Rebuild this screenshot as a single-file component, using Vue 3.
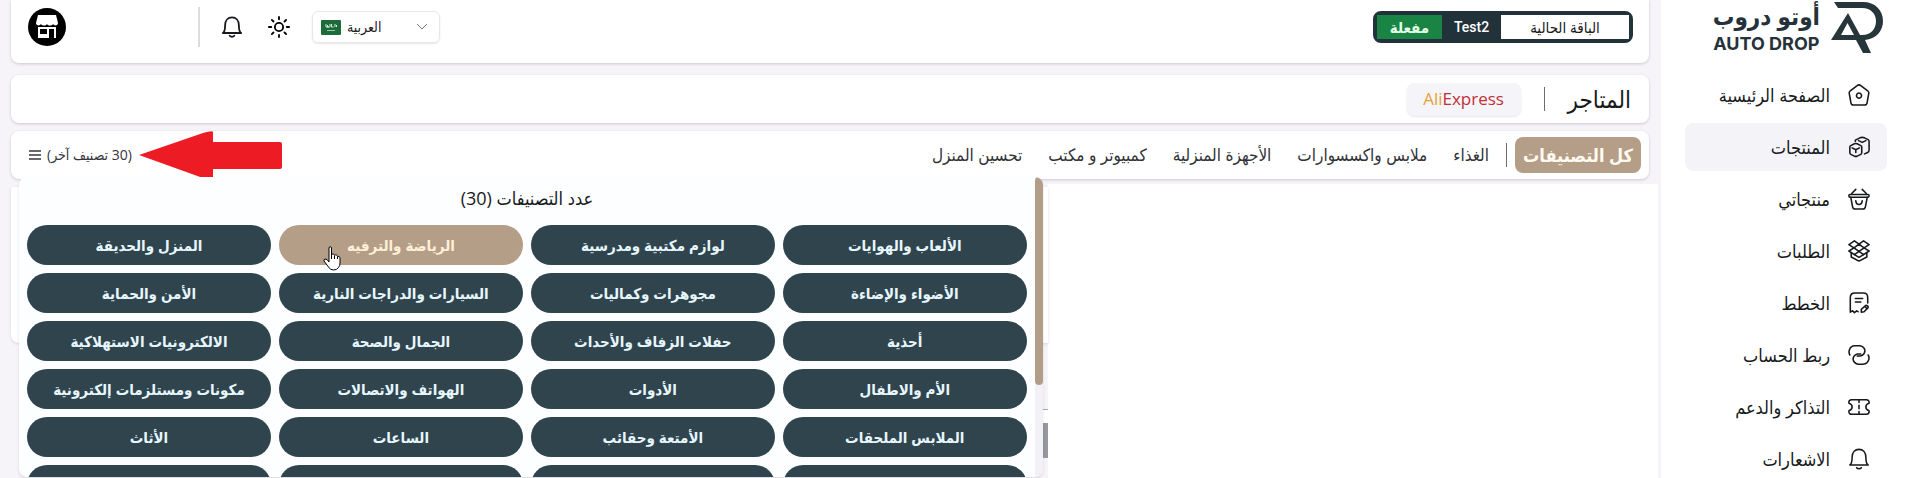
<template>
  <div class="page" dir="rtl">
    <aside class="sidebar">
      <a href="#" class="brand">
        <svg class="brand-mark" viewBox="0 0 54 52">
          <path fill="#26363b" fill-rule="evenodd" d="M4 0H33C45 0 53 8 53 19C53 29 46 37 35 38L41 51H33L26 38H1L18 11L30 33H32C41 33 46 27 46 19C46 12 41 6 32 6H8ZM17.500 21L11 33H24Z" />
        </svg>
        <span class="brand-text">
          <strong class="brand-ar">أوتو دروب</strong>
          <strong class="brand-en">AUTO DROP</strong>
        </span>
      </a>
      <nav class="menu">
        <a
          v-for="item in menuItems"
          :key="item.label"
          href="#"
          class="menu-item"
          :class="{ active: item.label === activeMenu }"
          @click.prevent="activeMenu = item.label"
        >
          <svg class="menu-icon" viewBox="0 0 24 24">
            <path v-for="d in item.paths" :key="d" :d="d" />
          </svg>
          <span>{{ item.label }}</span>
        </a>
      </nav>
    </aside>

    <main class="main">
      <header class="card header">
        <div class="plan">
          <span class="plan-title">الباقة الحالية</span>
          <span class="plan-name">Test2</span>
          <span class="plan-state">مفعلة</span>
        </div>
        <div class="tools">
          <label class="lang">
            <svg class="flag" viewBox="0 0 20 15">
              <rect width="20" height="15" rx="1" fill="#1d6b39" />
              <path d="M5 4v3M6.500 5v2h2M9 4v3M10.500 4v3h2M14 4v3M15.500 5v2M5 7h3" fill="none" stroke="#d5e8da" stroke-width="1" />
              <path d="M6 10.500h8" stroke="#9cc7aa" stroke-width="1" />
            </svg>
            <select v-model="language" aria-label="اللغة">
              <option>العربية</option>
              <option>English</option>
            </select>
            <svg class="chevron" viewBox="0 0 12 8"><path d="M1 1l5 5 5-5" /></svg>
          </label>
          <button class="icon-btn" type="button" aria-label="الوضع">
            <svg viewBox="0 0 24 24" class="sun">
              <circle cx="12" cy="12" r="4.500" />
              <path d="M12 1v2.500M12 20.500V23M1 12h2.500M20.500 12H23M4.200 4.200l1.800 1.800M18 18l1.800 1.800M4.200 19.800L6 18M18 6l1.800-1.800" />
            </svg>
          </button>
          <button class="icon-btn" type="button" aria-label="الاشعارات">
            <svg viewBox="0 0 24 24" class="bell">
              <path v-for="d in bell" :key="d" :d="d" />
            </svg>
          </button>
          <span class="tools-line"></span>
          <button class="avatar" type="button" aria-label="المتجر">
            <svg viewBox="0 0 38 38">
              <circle cx="19" cy="19" r="19" fill="#000" />
              <path fill="#fff" fill-rule="evenodd" d="M10 7H28L30 15C30 18 26 18 25 16C24 18 20 18 19 16C18 18 14 18 13 16C12 18 8 18 8 15ZM10 19H28V30H10ZM12 21V26H19V21ZM21 21V30H26V21Z" />
            </svg>
          </button>
        </div>
      </header>

      <section class="card stores">
        <h1>المتاجر</h1>
        <span class="line"></span>
        <button class="store" type="button"><span class="ali">Ali</span>Express</button>
      </section>

      <section class="card categories">
        <button class="all" type="button">كل التصنيفات</button>
        <span class="line"></span>
        <nav class="tabs">
          <a v-for="tab in tabs" :key="tab" href="#">{{ tab }}</a>
        </nav>
        <svg class="arrow" viewBox="0 0 143 49">
          <path d="M0 24L64 2Q74 -1 74 1V11H141Q143 11 143 13V36Q143 38 141 38H74V49Q68 49 64 47Z" fill="#ed1c24" />
        </svg>
        <button class="more" type="button" @click="open = !open">
          <span>(30 تصنيف آخر)</span>
          <svg viewBox="0 0 12 12"><path d="M0 2h12M0 6h12M0 10h12" /></svg>
        </button>

        <div v-if="open" class="dropdown">
          <div class="scrollbar"><div class="thumb"></div></div>
          <div class="panel">
            <h2>عدد التصنيفات (30)</h2>
            <div class="grid">
              <button
                v-for="(name, index) in categories"
                :key="index"
                type="button"
                class="pill"
                :class="{ hovered: name === hovered }"
              >
                {{ name }}
                <svg v-if="name === hovered" class="pointer" viewBox="0 0 18 25">
                  <path d="M6 2Q6 0.800 7.200 0.800Q8.500 0.800 8.500 2V9Q9 7.500 10.300 8Q11.500 8.200 11.500 9.500Q12.500 8.500 13.500 9Q14.500 9.500 14.500 10.500Q16 10 17 11.500V17Q17 20 15.500 21.500Q14 24 10.500 24Q7 24 5.500 21L1 15Q0.500 13.500 2 13Q4 12.500 6 16Z" fill="#fff" stroke="#000" />
                  <path d="M8.500 9v4M11.500 10v3M14.500 11v2" stroke="#000" />
                </svg>
              </button>
            </div>
          </div>
        </div>
      </section>

      <div class="content">
        <div class="blank"></div>
        <div class="results">
          <div class="result-card"></div>
          <div class="strip"></div>
        </div>
      </div>
    </main>
  </div>
</template>

<script setup>
import { ref } from 'vue';

const activeMenu = ref('المنتجات');
const language = ref('العربية');
const open = ref(true);
const hovered = ref('الرياضة والترفيه');

const bell = [
  'M2 18.500H22C19.500 17 19.500 14 19.500 10C19.500 5 16.500 1.500 12 1.500S4.500 5 4.500 10C4.500 14 4.500 17 2 18.500Z',
  'M9.500 21.500C10.500 23 13.500 23 14.500 21.500',
];

const menuItems = [
  {
    label: 'الصفحة الرئيسية',
    paths: [
      'M10 1.800Q12 0.200 14 1.800L21.500 7.500Q23 8.500 22.600 10.500L20.800 20.500Q20.300 23 18 23H6Q3.700 23 3.200 20.500L1.400 10.500Q1 8.500 2.500 7.500Z',
      'M12 9.800a2.800 2.800 0 1 0 0.010 0Z',
    ],
  },
  {
    label: 'المنتجات',
    paths: [
      'M2 12Q2 11 3 10.500L7 8.500Q8.500 8 10 8.500L14 10.500Q15 11 15 12V18Q15 19.500 14 20L10 22Q8.500 22.500 7 22L3 20Q2 19.500 2 18Z',
      'M4.500 13L8.500 15L12.500 13M8.500 15V18',
      'M8 6V4.500L13 2Q15.500 1 18 2L22 4Q23 4.500 23 6V15Q23 17 21.500 18L18 19.500M11.500 5L15.500 7L19.500 5',
    ],
  },
  {
    label: 'منتجاتي',
    paths: [
      'M2 7H22Q23 7 23 8.500T22 10H2Q1 10 1 8.500T2 7Z',
      'M3 10L5 20.500Q5.500 23 8 23H16Q18.500 23 19 20.500L21 10M4 6L8.500 1.500M20 6L15.500 1.500',
      'M8.500 14Q9 18 12 18T15.500 14',
    ],
  },
  {
    label: 'الطلبات',
    paths: [
      'M7 1L12 4.500L17 1L23 5L17.500 8.500L23 12L17 16L12 12.500L7 16L1 12L6.500 8.500L1 5Z',
      'M12 4.500L17.500 8.500L12 12.500L6.500 8.500Z',
      'M3.500 14V18.500L12 23L20.500 18.500V14M7 16L12 19L17 16',
    ],
  },
  {
    label: 'الخطط',
    paths: [
      'M21.500 12V6Q21.500 1 16.500 1H7.500Q2.500 1 2.500 6V22L5 20.500L7 22.500L9.500 20.500L11 21.500',
      'M8 7H16M8 11H14',
      'M14.500 19L19.500 14.500Q22 14.500 22 17L17.500 21.500L14.500 22ZM18.500 16L20.500 18',
    ],
  },
  {
    label: 'ربط الحساب',
    paths: [
      'M2 12Q0.500 9.500 1.500 6.500Q3 2 7.500 2H13Q18 3 18.500 7.500Q18 12 13.500 13H10',
      'M22 12Q23.500 14.500 22.500 17.500Q21 22 16.500 22H11Q6 21 5.500 16.500Q6 12 10.500 11H14',
    ],
  },
  {
    label: 'التذاكر والدعم',
    paths: [
      'M4 4H20Q23 4 23 7V8Q19.500 9 19.500 12T23 16V17Q23 20 20 20H4Q1 20 1 17V16Q4.500 15 4.500 12T1 8V7Q1 4 4 4Z',
      'M12 4V7M12 10V14M12 17V20',
    ],
  },
  { label: 'الاشعارات', paths: bell },
];

const tabs = [
  'الغذاء',
  'ملابس واكسسوارات',
  'الأجهزة المنزلية',
  'كمبيوتر و مكتب',
  'تحسين المنزل',
];

const categories = [
  'الألعاب والهوايات', 'لوازم مكتبية ومدرسية', 'الرياضة والترفيه', 'المنزل والحديقة',
  'الأضواء والإضاءة', 'مجوهرات وكماليات', 'السيارات والدراجات النارية', 'الأمن والحماية',
  'أحذية', 'حفلات الزفاف والأحداث', 'الجمال والصحة', 'الالكترونيات الاستهلاكية',
  'الأم والاطفال', 'الأدوات', 'الهواتف والاتصالات', 'مكونات ومستلزمات إلكترونية',
  'الملابس الملحقات', 'الأمتعة وحقائب', 'الساعات', 'الأثاث',
  '', '', '', '',
];
</script>

<style>
body {
  background: #fff;
  overflow: hidden;
}
</style>

<style scoped>
* {
  box-sizing: border-box;
}

.page {
  display: flex;
  height: 100vh;
  overflow: hidden;
  background: #f6f4f8;
  color: #17191c;
  font-family: "Open Sans", "DejaVu Sans Condensed", "DejaVu Sans", sans-serif;
  font-size: 14px;
  line-height: 24px;
}

a {
  color: inherit;
  text-decoration: none;
}

button,
select {
  padding: 0;
  border: 0;
  background: none;
  color: inherit;
  font: inherit;
  cursor: pointer;
}

svg {
  display: block;
  flex: none;
  fill: none;
}

/* sidebar */
.sidebar {
  flex: none;
  width: 257px;
  padding: 0 31px 0 24px;
  overflow: hidden;
  background: #fff;
}

.brand {
  display: flex;
  gap: 10px;
  height: 71px;
  padding: 2px 3px 0 0;
  color: #26323a;
}

.brand-mark {
  width: 54px;
  height: 52px;
}

.brand-text {
  display: flex;
  flex-direction: column;
  align-items: center;
  white-space: nowrap;
}

.brand-ar {
  font-size: 24px;
  line-height: 28px;
}

.brand-en {
  font-family: Inter, sans-serif;
  font-size: 18px;
  line-height: 28px;
}

.menu {
  display: flex;
  flex-direction: column;
  gap: 4px;
}

.menu-item {
  display: flex;
  flex: none;
  align-items: center;
  gap: 18px;
  height: 48px;
  padding: 0 17px;
  border-radius: 8px;
  font-size: 18px;
  white-space: nowrap;
}

.menu-item.active {
  background: #f4f3f8;
}

.menu-icon {
  width: 22px;
  height: 22px;
  stroke: #17191c;
  stroke-width: 1.7;
  stroke-linejoin: round;
  stroke-linecap: round;
}

/* main column */
.main {
  display: flex;
  flex: 1;
  flex-direction: column;
  min-width: 0;
}

.card {
  display: flex;
  flex: none;
  align-items: center;
  height: 48px;
  margin: 0 12px 8px 11px;
  border-radius: 8px;
  background: #fff;
  box-shadow: 0 1px 3px rgba(40, 30, 60, 0.2);
  white-space: nowrap;
}

.header {
  align-items: flex-start;
  justify-content: space-between;
  height: 63px;
  margin-bottom: 12px;
  padding: 7px 16px 0 17px;
  border-radius: 0 0 8px 8px;
}

.plan {
  display: flex;
  height: 32px;
  margin-top: 4px;
  border: 4px solid #22323a;
  border-radius: 8px;
  background: #22323a;
  text-align: center;
}

.plan-title {
  width: 128px;
  background: #fff;
  font-size: 15px;
}

.plan-name {
  width: 59px;
  color: #fff;
  font-family: Roboto, sans-serif;
  font-weight: 500;
}

.plan-state {
  width: 65px;
  background: #198443;
  color: #e2ffe8;
  font-size: 15px;
  font-weight: 600;
}

.tools {
  display: flex;
  align-items: center;
  height: 40px;
}

.lang {
  display: flex;
  direction: ltr;
  align-items: center;
  gap: 6px;
  width: 128px;
  height: 32px;
  margin-left: 22px;
  padding: 0 11px 0 8px;
  border: 1px solid #e8e6ea;
  border-radius: 6px;
  box-shadow: 0 1px 2px rgba(0, 0, 0, 0.1);
}

.flag {
  width: 20px;
  height: 15px;
}

.lang select {
  flex: 1;
  min-width: 0;
  appearance: none;
  outline: none;
}

.chevron {
  width: 12px;
  height: 8px;
  stroke: #777;
}

.icon-btn {
  margin-left: 25px;
}

.icon-btn svg {
  width: 22px;
  height: 22px;
  stroke: #17191c;
  stroke-width: 2;
  stroke-linecap: round;
  stroke-linejoin: round;
}

.icon-btn .sun {
  stroke: #000;
}

.tools-line {
  width: 2px;
  height: 40px;
  margin-left: 132px;
  margin-right: -4px;
  background: #dcdcde;
}

.avatar svg {
  width: 38px;
  height: 38px;
}

.stores {
  padding: 0 18px;
}

.stores h1 {
  margin: 0;
  font-size: 24px;
  font-weight: 400;
  line-height: 32px;
}

.line {
  width: 1px;
  height: 24px;
  background: #6a6c70;
}

.stores .line {
  margin: 0 23px;
}

.store {
  width: 114px;
  height: 33px;
  border-radius: 8px;
  background: #f5f4f9;
  box-shadow: 0 1px 2px rgba(40, 30, 60, 0.12);
  color: #bf3038;
  font-size: 17px;
  direction: ltr;
}

.ali {
  color: #e5a23c;
}

.categories {
  position: relative;
  margin-bottom: 5px;
  padding: 0 8px 0 18px;
}

.all {
  height: 36px;
  padding: 0 8px;
  border-radius: 8px;
  background: #b59e87;
  color: #fffaf0;
  font-size: 18px;
  font-weight: 600;
}

.categories .line {
  margin: 0 8px 0 17px;
}

.tabs {
  display: flex;
  flex: 1;
  gap: 26px;
  color: #303236;
  font-size: 17px;
}

.arrow {
  width: 143px;
  height: 49px;
}

.more {
  display: flex;
  align-items: center;
  gap: 6px;
  margin-right: 7px;
  color: #33353a;
  font-size: 14px;
}

.more svg {
  width: 12px;
  height: 12px;
  stroke: #66686c;
  stroke-width: 2;
}

/* menu that opens below the categories bar */
.dropdown {
  position: absolute;
  z-index: 2;
  top: 46px;
  left: 8px;
  display: flex;
  width: 62.5%;
  height: 300px;
  overflow: hidden;
  border-radius: 8px;
  background: #fcfeff;
  box-shadow: 0 2px 3px rgba(40, 30, 60, 0.12);
}

.scrollbar {
  flex: none;
  width: 8px;
  background: #f2f1f6;
}

.thumb {
  height: 208px;
  border-radius: 4px;
  background: #b29d89;
}

.panel {
  flex: 1;
  padding: 8px;
}

.panel h2 {
  margin: 0 0 14px;
  font-size: 18px;
  font-weight: 400;
  line-height: 26px;
  text-align: center;
}

.grid {
  display: grid;
  grid-template-columns: repeat(4, 1fr);
  gap: 8px;
}

.pill {
  position: relative;
  height: 40px;
  border-radius: 20px;
  background: #30444d;
  color: #e6f6fd;
  font-size: 15px;
  font-weight: 600;
}

.pill.hovered {
  background: #b59e87;
  color: #ffefd8;
}

.pointer {
  position: absolute;
  top: 21px;
  left: 44px;
  width: 18px;
  height: 25px;
}

.content {
  display: grid;
  flex: 1;
  grid-template-columns: 610fr 1048fr;
  margin-right: 3px;
}

.blank {
  background: #fff;
}

.results {
  display: flex;
  flex-direction: column;
  padding-top: 3px;
}

.result-card {
  height: 156px;
  margin-left: 11px;
  border-radius: 0 0 0 8px;
  background: #fff;
  box-shadow: 0 1px 3px rgba(40, 30, 60, 0.15);
}

.strip {
  height: 49px;
  margin-top: 66px;
  margin-left: 1030px;
  border-top: 1px solid #a5a5aa;
  border-bottom: 35px solid #97979f;
  background: #fff;
}
</style>
